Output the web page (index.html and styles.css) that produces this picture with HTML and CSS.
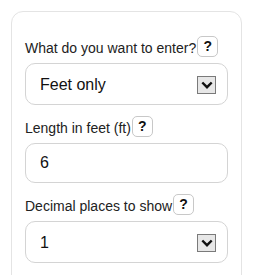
FILE: index.html
```html
<!DOCTYPE html>
<html lang="en">
<head>
  <meta charset="UTF-8" />
  <meta name="viewport" content="width=device-width, initial-scale=1.0"/>
  <title>Feet converter</title>
  <link rel="stylesheet" href="styles.css">
</head>
<body>
  <div class="card">
    <div class="field">
      <div class="label-row">
        <label for="mode">What do you want to enter?</label>
        <button class="help" type="button">?</button>
      </div>
      <div class="select-wrap">
        <select id="mode">
          <option>Feet only</option>
          <option>Feet and inches</option>
        </select>
        <span class="arrow">
          <svg width="12" height="8" viewBox="0 0 12 8"><path d="M1.3 1.5 L6 6.2 L10.7 1.5" fill="none" stroke="#111" stroke-width="2.4"/></svg>
        </span>
      </div>
    </div>

    <div class="field">
      <div class="label-row">
        <label for="feet">Length in feet (ft)</label>
        <button class="help" type="button">?</button>
      </div>
      <input type="text" id="feet" value="6" />
    </div>

    <div class="field">
      <div class="label-row">
        <label for="decimals">Decimal places to show</label>
        <button class="help" type="button">?</button>
      </div>
      <div class="select-wrap">
        <select id="decimals">
          <option>1</option>
          <option>2</option>
          <option>3</option>
        </select>
        <span class="arrow">
          <svg width="12" height="8" viewBox="0 0 12 8"><path d="M1.3 1.5 L6 6.2 L10.7 1.5" fill="none" stroke="#111" stroke-width="2.4"/></svg>
        </span>
      </div>
    </div>
  </div>
</body>
</html>
```

FILE: styles.css
```css
* { margin: 0; padding: 0; box-sizing: border-box; }

html, body {
  width: 100%;
  height: 100%;
  font-family: 'Liberation Sans', Arial, sans-serif;
  background-color: #fff;
  color: #222;
  overflow: hidden;
}

body {
  padding: 11px 11px 0 11px;
}

.card {
  border: 1px solid #e4e4e4;
  border-radius: 12px;
  padding: 23px 13px 20px 13px;
  height: 300px;
}

.field {
  margin-bottom: 10px;
}

.label-row {
  display: flex;
  align-items: center;
  height: 22px;
  margin-bottom: 6px;
}

label {
  font-size: 14px;
  color: #222;
  padding-top: 3px;
}

.help {
  margin-left: 1px;
  width: 21px;
  height: 21px;
  border: 1px solid #c8c8c8;
  border-radius: 5px;
  background: #fff;
  font-family: 'Liberation Sans', Arial, sans-serif;
  font-weight: bold;
  font-size: 14px;
  color: #111;
  line-height: 19px;
  text-align: center;
}

.select-wrap {
  position: relative;
}

select,
input[type="text"] {
  display: block;
  width: 100%;
  height: 42px;
  padding: 0 14px;
  border: 1px solid #d4d4d4;
  border-radius: 10px;
  background: #fff;
  font-family: 'Liberation Sans', Arial, sans-serif;
  font-size: 16px;
  color: #111;
  outline: none;
  appearance: none;
  -webkit-appearance: none;
}

input[type="text"] {
  height: 40px;
}

.arrow {
  position: absolute;
  right: 12px;
  top: 13px;
  width: 19px;
  height: 18px;
  border: 1px solid #7a7a7a;
  background: #e7e7e7;
  display: flex;
  align-items: center;
  justify-content: center;
  pointer-events: none;
}
```
